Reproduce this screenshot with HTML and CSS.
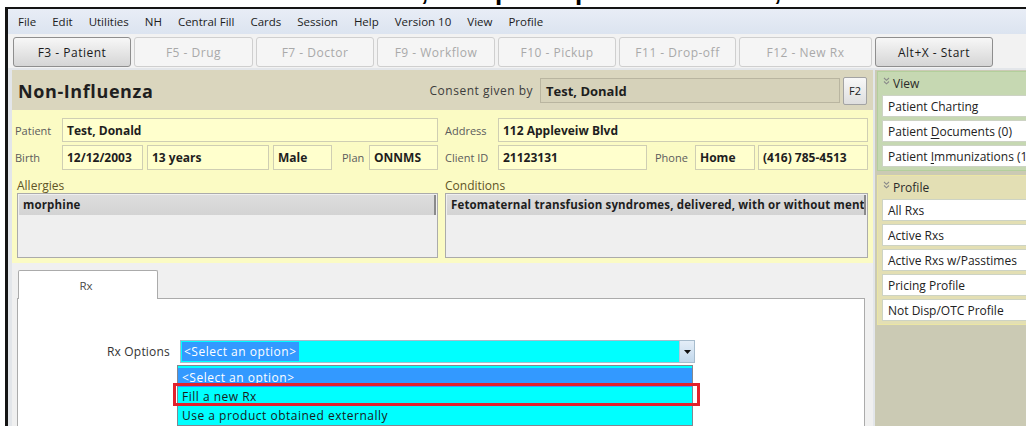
FILE: index.html
```html
<!DOCTYPE html>
<html lang="en">
<head>
<meta charset="utf-8">
<title>Non-Influenza</title>
<link rel="stylesheet" href="styles.css">
</head>
<body>
<div class="doc-edge">
  <div class="doc-edge-text"><span class="frag w74">,</span><span class="frag w80">p</span><span class="frag w199">p</span><span class="frag">,</span></div>
</div>
<div class="window">
  <nav class="menubar">
    <span class="menu-item">File</span>
    <span class="menu-item">Edit</span>
    <span class="menu-item">Utilities</span>
    <span class="menu-item">NH</span>
    <span class="menu-item">Central Fill</span>
    <span class="menu-item">Cards</span>
    <span class="menu-item">Session</span>
    <span class="menu-item">Help</span>
    <span class="menu-item">Version 10</span>
    <span class="menu-item">View</span>
    <span class="menu-item">Profile</span>
  </nav>
  <div class="toolbar">
    <button class="tb tb-on w118">F3 - Patient</button>
    <button class="tb w119">F5 - Drug</button>
    <button class="tb w118">F7 - Doctor</button>
    <button class="tb w118">F9 - Workflow</button>
    <button class="tb w118">F10 - Pickup</button>
    <button class="tb w117">F11 - Drop-off</button>
    <button class="tb w133">F12 - New Rx</button>
    <button class="tb tb-on w118">Alt+X - Start</button>
  </div>
  <div class="workspace">
    <main class="record">
      <header class="record-head">
        <h1 class="record-title">Non-Influenza</h1>
        <div class="consent">
          <span class="consent-label">Consent given by</span>
          <div class="consent-box">Test, Donald</div>
          <button class="key-btn">F2</button>
        </div>
      </header>
      <section class="info">
        <div class="row">
          <span class="lbl w47">Patient</span>
          <div class="val grow">Test, Donald</div>
        </div>
        <div class="row">
          <span class="lbl w53">Address</span>
          <div class="val grow">112 Appleveiw Blvd</div>
        </div>
        <div class="row">
          <span class="lbl w47">Birth</span>
          <div class="val w81">12/12/2003</div>
          <div class="val w122 ml4">13 years</div>
          <div class="val w59 ml4">Male</div>
          <span class="lbl lbl-plan">Plan</span>
          <div class="val grow">ONNMS</div>
        </div>
        <div class="row">
          <span class="lbl w53">Client ID</span>
          <div class="val w149">21123131</div>
          <span class="lbl lbl-phone">Phone</span>
          <div class="val w60">Home</div>
          <div class="val grow ml3">(416) 785-4513</div>
        </div>
        <div class="list-block list-left">
          <div class="list-label">Allergies</div>
          <div class="list">
            <div class="list-head">morphine</div>
          </div>
        </div>
        <div class="list-block">
          <div class="list-label">Conditions</div>
          <div class="list">
            <div class="list-head">Fetomaternal transfusion syndromes, delivered, with or without mention of antepartum condition</div>
          </div>
        </div>
      </section>
      <section class="tabs">
        <div class="tab-strip">
          <div class="tab">Rx</div>
        </div>
        <div class="tab-panel">
          <div class="field-row">
            <label class="field-label">Rx Options</label>
            <div class="combo">
              <span class="combo-text">&lt;Select an option&gt;</span>
              <span class="combo-btn">
                <svg width="7" height="4" viewBox="0 0 7 4"><path d="M0 0H7L3.5 4Z" fill="#111"/></svg>
              </span>
              <ul class="combo-list">
                <li class="combo-opt combo-opt-hover">&lt;Select an option&gt;</li>
                <li class="combo-opt">Fill a new Rx</li>
                <li class="combo-opt">Use a product obtained externally</li>
              </ul>
              <div class="focus-mark"></div>
            </div>
          </div>
        </div>
      </section>
    </main>
    <aside class="sidebar">
      <div class="pane pane-view">
        <div class="pane-head">
          <svg class="chev" width="7" height="8" viewBox="0 0 7 8"><path d="M1 1L3.5 3.3L6 1M1 4.5L3.5 6.8L6 4.5" fill="none" stroke="#8a8a8a" stroke-width="1.1"/></svg>
          <span>View</span>
        </div>
        <div class="pane-item"><span>Patient Charting</span></div>
        <div class="pane-item"><span>Patient <u>D</u>ocuments (0)</span></div>
        <div class="pane-item"><span>Patient <u>I</u>mmunizations (1)</span></div>
      </div>
      <div class="pane pane-profile">
        <div class="pane-head">
          <svg class="chev" width="7" height="8" viewBox="0 0 7 8"><path d="M1 1L3.5 3.3L6 1M1 4.5L3.5 6.8L6 4.5" fill="none" stroke="#8a8a8a" stroke-width="1.1"/></svg>
          <span>Profile</span>
        </div>
        <div class="pane-item"><span>All Rxs</span></div>
        <div class="pane-item"><span>Active Rxs</span></div>
        <div class="pane-item"><span>Active Rxs w/Passtimes</span></div>
        <div class="pane-item"><span>Pricing Profile</span></div>
        <div class="pane-item"><span>Not Disp/OTC Profile</span></div>
      </div>
    </aside>
  </div>
</div>
</body>
</html>
```
FILE: styles.css
```css
* { box-sizing: border-box; margin: 0; padding: 0; }

html, body {
  width: 1026px;
  height: 426px;
  overflow: hidden;
  background: #fff;
}

body {
  font-family: "Open Sans", "Noto Sans", sans-serif;
  font-size: 12px;
  color: #1e1e1e;
  display: flex;
  flex-direction: column;
}

/* cut-off line of the page above the window */
.doc-edge {
  height: 7px;
  overflow: hidden;
  flex: none;
}
.doc-edge-text {
  display: flex;
  padding-left: 421px;
  margin-top: -22px;
  font: bold 26px/26px "Liberation Sans", sans-serif;
  color: #000;
}
.frag { display: block; }
.frag.w74 { width: 74px; }
.frag.w80 { width: 80px; }
.frag.w199 { width: 199px; }

/* application window */
.window {
  flex: 1;
  margin-left: 5px;
  border-top: 2px solid #141414;
  border-left: 3px solid #141414;
  display: flex;
  flex-direction: column;
  min-height: 0;
}

.menubar {
  height: 25px;
  flex: none;
  display: flex;
  align-items: center;
  padding-left: 2px;
  background: linear-gradient(#e8edf6, #dce4f0);
  color: #1c1c1c;
  font-size: 11.5px;
}
.menu-item { padding: 0 8px; }

.toolbar {
  height: 34px;
  flex: none;
  display: flex;
  gap: 3px;
  padding: 3px 0 0 5px;
  background: #f2f2f2;
}
.tb {
  height: 30px;
  border: 1px solid #cfcfcf;
  border-radius: 3px;
  background: #f5f5f5;
  color: #a9a9a9;
  font: inherit;
  letter-spacing: 0.5px;
}
.tb-on {
  border-color: #8e8e8e;
  background: linear-gradient(#f7f7f7, #e6e6e6 50%, #d5d5d5);
  color: #1a1a1a;
}
.w117 { width: 117px; }
.w118 { width: 118px; }
.w119 { width: 119px; }
.w133 { width: 133px; }

.workspace {
  flex: 1;
  display: flex;
  gap: 2px;
  padding: 2px 0 0 4px;
  background: #e3e6ea;
  min-height: 0;
}

/* patient record */
.record {
  width: 861px;
  flex: none;
  display: flex;
  flex-direction: column;
}

.record-head {
  height: 40px;
  flex: none;
  display: flex;
  align-items: center;
  padding: 1px 6px 0 6px;
  background: #dad6be;
}
.record-title {
  font-size: 18px;
  font-weight: bold;
  letter-spacing: 0.6px;
  color: #1f1f1f;
}
.consent {
  margin-left: auto;
  display: flex;
  align-items: center;
}
.consent-label { color: #3c3c3c; margin-right: 7px; letter-spacing: 0.5px; }
.consent-box {
  width: 300px;
  height: 25px;
  display: flex;
  align-items: center;
  padding-left: 5px;
  font-weight: bold;
  font-size: 13px;
  background: #d6d2ba;
  border: 1px solid #b9b5a0;
  margin-right: 3px;
}
.key-btn {
  width: 24px;
  height: 28px;
  border: 1px solid #a3a3a3;
  border-radius: 2px;
  background: linear-gradient(#f8f8f8, #dedede);
  font: inherit;
  font-size: 11px;
  color: #222;
}

.info {
  height: 153px;
  flex: none;
  display: grid;
  grid-template-columns: 423px 423px;
  grid-template-rows: 24px 25px 1fr;
  column-gap: 7px;
  row-gap: 3px;
  padding: 8px 5px 5px 3px;
  background: #fbfbc4;
}
.row { display: flex; }
.lbl {
  display: flex;
  align-items: center;
  flex: none;
  font-size: 11px;
  color: #5c5c5c;
}
.w47 { width: 47px; }
.w53 { width: 53px; }
.lbl-plan { width: 37px; padding-left: 10px; }
.lbl-phone { width: 48px; padding-left: 8px; }
.val {
  display: flex;
  align-items: center;
  flex: none;
  padding-left: 4px;
  font-weight: bold;
  font-size: 12px;
  background: #ffffcd;
  border: 1px solid #cfceb3;
  white-space: nowrap;
  overflow: hidden;
}
.val.grow { flex: 1; }
.w59 { width: 59px; }
.w60 { width: 60px; }
.w81 { width: 81px; }
.w122 { width: 122px; }
.w149 { width: 149px; }
.ml3 { margin-left: 3px; }
.ml4 { margin-left: 4px; }

.list-block {
  margin-top: 6px;
  display: flex;
  flex-direction: column;
}
.list-left { padding-left: 2px; }
.list-label {
  height: 14px;
  line-height: 13px;
  color: #5f5427;
}
.list {
  height: 65px;
  border: 1px solid #ababab;
  background: #efefef;
  padding: 1px;
}
.list-head {
  height: 20px;
  line-height: 20px;
  padding-left: 4px;
  font-weight: bold;
  font-size: 11.5px;
  letter-spacing: 0.15px;
  background: linear-gradient(#dddddd, #d3d3d3);
  border-right: 2px solid #8a8a8a;
  white-space: nowrap;
  overflow: hidden;
}

/* tabbed area */
.tabs {
  flex: 1;
  display: flex;
  flex-direction: column;
  padding: 7px 8px 0 5px;
  background: #f0f0f0;
  min-height: 0;
}
.tab-strip {
  height: 28px;
  flex: none;
  display: flex;
  align-items: flex-start;
}
.tab {
  position: relative;
  z-index: 1;
  width: 140px;
  height: 29px;
  margin-left: 1px;
  display: flex;
  align-items: center;
  justify-content: center;
  padding-right: 4px;
  background: #fff;
  border: 1px solid #ababab;
  border-bottom: none;
  border-radius: 2px 2px 0 0;
  color: #4a4a4a;
  font-size: 11.5px;
}
.tab-panel {
  flex: 1;
  background: #fff;
  border: 1px solid #ababab;
  border-bottom: none;
  padding-top: 41px;
}
.field-row {
  display: flex;
  align-items: center;
}
.field-label {
  width: 152px;
  margin-right: 10px;
  text-align: right;
  color: #333;
  letter-spacing: 0.2px;
}
.combo {
  position: relative;
  width: 515px;
  height: 23px;
  display: flex;
  align-items: center;
  background: #00ffff;
  border: 1px solid #a7bccd;
  letter-spacing: 0.5px;
}
.combo-text {
  margin-left: 1px;
  height: 19px;
  line-height: 19px;
  padding: 0 2px;
  background: #3399ff;
  color: #fff;
}
.combo-btn {
  margin-left: auto;
  width: 15px;
  height: 21px;
  display: flex;
  align-items: center;
  justify-content: center;
  background: linear-gradient(#e4eef8, #c2d8ec);
  border-left: 1px solid #b2c9dc;
}
.combo-list {
  position: absolute;
  top: 24px;
  left: -4px;
  width: 516px;
  list-style: none;
  background: #00ffff;
  border: 1px solid #838790;
  padding-top: 2px;
  z-index: 2;
}
.combo-opt {
  height: 19px;
  line-height: 19px;
  padding-left: 4px;
  color: #1a1a1a;
  white-space: nowrap;
}
.combo-opt-hover {
  background: #3399ff;
  color: #fff;
}
.focus-mark {
  position: absolute;
  top: 42px;
  left: -8px;
  width: 527px;
  height: 23px;
  border: 3px solid #e3212b;
  z-index: 3;
}

/* side navigation */
.sidebar {
  flex: 1;
  background: #cbcab4;
  padding: 1px 0 0 2px;
  overflow: hidden;
  font-size: 12px;
}
.pane {
  width: 170px;
  border: 1px solid;
  padding-bottom: 3px;
}
.pane-view { background: #c6d8b2; border-color: #b3cf9c; }
.pane-profile { background: #e3dfb4; border-color: #ebe6a4; margin-top: 4px; }
.pane-head {
  height: 23px;
  display: flex;
  align-items: center;
  gap: 3px;
  padding-left: 5px;
  color: #2a2a2a;
}
.chev { margin-top: -5px; }
.pane-item {
  height: 22px;
  margin: 0 0 3px 4px;
  display: flex;
  align-items: center;
  padding-left: 5px;
  background: #fff;
  border: 1px solid #cdd3c4;
  color: #222;
  white-space: nowrap;
}
.pane-item:last-child { margin-bottom: 0; }
.pane-item u { text-decoration-thickness: 1px; text-underline-offset: 2px; }
```
